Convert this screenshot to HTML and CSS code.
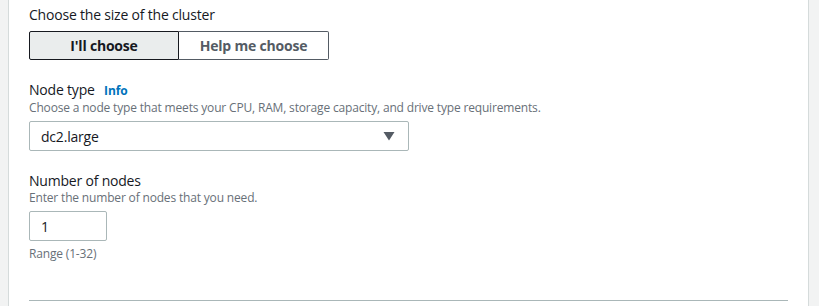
FILE: index.html
```html
<!DOCTYPE html>
<html lang="en">
<head>
    <meta charset="UTF-8">
    <title>Cluster configuration</title>
    <link rel="stylesheet" href="styles.css">
</head>
<body>
    <div class="panel">
        <div class="field">
            <div class="field-label">Choose the size of the cluster</div>
            <div class="segmented">
                <button class="seg-btn active">I'll choose</button>
                <button class="seg-btn">Help me choose</button>
            </div>
        </div>

        <div class="field">
            <div class="field-label">Node type <a href="#" class="info">Info</a></div>
            <div class="field-desc">Choose a node type that meets your CPU, RAM, storage capacity, and drive type requirements.</div>
            <div class="select">
                <span>dc2.large</span>
                <svg class="caret" width="12" height="10" viewBox="0 0 12 10"><path d="M0.5 1h11L6 9.5z" fill="#545b64"/></svg>
            </div>
        </div>

        <div class="field">
            <div class="field-label">Number of nodes</div>
            <div class="field-desc">Enter the number of nodes that you need.</div>
            <input class="num-input" type="text" value="1">
            <div class="field-hint">Range (1-32)</div>
        </div>

        <hr class="divider">
    </div>
</body>
</html>
```

FILE: styles.css
```css
body {
    margin: 0;
    padding: 0 10px 0 8px;
    background: #f2f3f3;
    font-family: 'Open Sans', 'Noto Sans', sans-serif;
    color: #16191f;
    height: 306px;
    overflow: hidden;
}

.panel {
    background: #fff;
    border-left: 1px solid #d5dbdb;
    border-right: 1px solid #d5dbdb;
    height: 306px;
    padding: 6px 20px 0;
    box-sizing: border-box;
}

.field {
    margin-bottom: 21px;
}

.field-label {
    font-size: 14px;
    line-height: 18px;
    letter-spacing: -0.2px;
}

.info {
    font-size: 12px;
    font-weight: bold;
    color: #0073bb;
    text-decoration: none;
    margin-left: 6px;
    letter-spacing: -0.1px;
}

.field-desc {
    font-size: 12px;
    line-height: 16px;
    letter-spacing: -0.17px;
    color: #687078;
    margin-bottom: 5px;
}

.segmented {
    display: flex;
    margin-top: 7px;
}

.seg-btn {
    width: 150px;
    height: 29px;
    font-family: inherit;
    font-size: 14px;
    font-weight: bold;
    letter-spacing: -0.2px;
    background: #fff;
    color: #545b64;
    border: 1px solid #545b64;
    border-left: none;
    border-radius: 0 2px 2px 0;
    cursor: pointer;
}

.seg-btn.active {
    background: #eaeded;
    color: #16191f;
    border: 1px solid #16191f;
    border-radius: 2px 0 0 2px;
}

.select {
    display: flex;
    justify-content: space-between;
    align-items: center;
    width: 380px;
    height: 30px;
    box-sizing: border-box;
    border: 1px solid #aab7b8;
    border-radius: 2px;
    padding: 0 13px 0 11px;
    font-size: 14px;
    letter-spacing: -0.2px;
}

.num-input {
    display: block;
    width: 78px;
    height: 30px;
    box-sizing: border-box;
    border: 1px solid #aab7b8;
    border-radius: 2px;
    padding: 0 11px;
    font-family: inherit;
    font-size: 14px;
    color: #16191f;
}

.field-hint {
    font-size: 12px;
    line-height: 16px;
    letter-spacing: -0.17px;
    color: #687078;
    margin-top: 5px;
}

.divider {
    border: none;
    border-top: 1px solid #aab7b8;
    margin: 38px 0 0;
}
```
